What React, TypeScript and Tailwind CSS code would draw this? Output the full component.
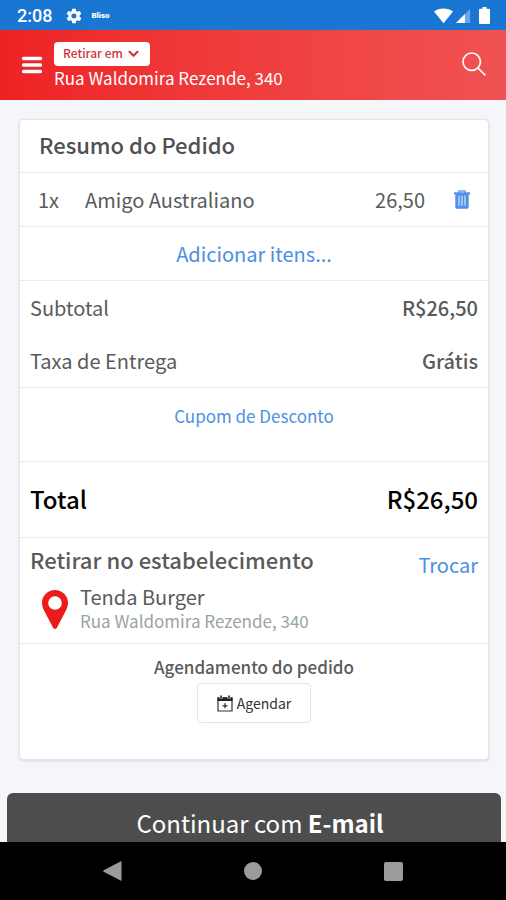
import type { ReactNode } from 'react';
import { IoMdSettings } from 'react-icons/io';

interface RowProps {
    label: string;
    value: string;
}

function StatusBar() {
    return (
        <div className="flex h-[30px] shrink-0 items-center bg-[#1976d2] pt-px pr-4 pl-[17px] text-white">
            <span className="font-['Roboto'] text-[18px] leading-6 font-medium">2:08</span>
            <IoMdSettings className="ml-[13px] size-[18px]" />
            <span className="ml-2 font-['Roboto'] text-[8px] leading-3 font-black">Bliso</span>
            <div className="ml-auto flex items-center gap-[3px]">
                <svg width="19" height="16" viewBox="0 0 19 16" fill="currentColor">
                    <path d="M0 3.4C2.6 1.3 5.8.4 9.5.4s6.900.9 9.500 3L9.500 15.200z" />
                </svg>
                <svg width="15" height="15" viewBox="0 0 16 16" fill="currentColor">
                    <path d="M15 1v15H0z" opacity=".35" />
                    <path d="M9.500 6.500V16H0z" />
                </svg>
                <svg className="ml-[5px]" width="11" height="17" viewBox="0 0 11 17" fill="currentColor">
                    <path d="M3.500 0h4v1.700H10a1 1 0 0 1 1 1V16a1 1 0 0 1-1 1H1a1 1 0 0 1-1-1V2.700a1 1 0 0 1 1-1h2.500z" />
                </svg>
            </div>
        </div>
    );
}

function Header() {
    return (
        <header className="flex h-[70px] shrink-0 items-center bg-linear-to-r from-[#ee2124] to-[#f05252] px-5 text-white">
            <button type="button" aria-label="Menu" className="mr-[10px] w-6">
                <svg width="24" height="20" viewBox="0 0 24 20" stroke="currentColor" strokeWidth="3.400" strokeLinecap="round">
                    <path d="M3.500 3.500h17M3.500 10h17M3.500 16.500h17" />
                </svg>
            </button>
            <div className="flex flex-col items-start pt-[2px]">
                <button
                    type="button"
                    className="flex h-6 items-center gap-[5px] rounded bg-white pr-[11px] pb-[2px] pl-[9px] text-[12px] leading-4 font-medium text-[#d0353a]"
                >
                    Retirar em
                    <svg className="mt-[2px]" width="11" height="8" viewBox="0 0 11 8" fill="none" stroke="currentColor" strokeWidth="2.200" strokeLinecap="round" strokeLinejoin="round">
                        <path d="M1.500 1.800l4 4 4-4" />
                    </svg>
                </button>
                <span className="text-[17px] leading-6">Rua Waldomira Rezende, 340</span>
            </div>
            <button type="button" aria-label="Buscar" className="ml-auto pb-[2px]">
                <svg width="24" height="24" viewBox="0 0 24 24" fill="none" stroke="currentColor" strokeWidth="1.700" strokeLinecap="round">
                    <circle cx="9.700" cy="9.700" r="8.700" />
                    <path d="M16 16l7 7" />
                </svg>
            </button>
        </header>
    );
}

function Section({ children, className }: { children: ReactNode; className: string }) {
    return <section className={`border-b border-[#ececee] last:border-b-0 ${className}`}>{children}</section>;
}

function SummaryRow({ label, value }: RowProps) {
    return (
        <div className="flex h-[53px] items-center justify-between">
            <span>{label}</span>
            <span className="font-medium">{value}</span>
        </div>
    );
}

function TrashIcon() {
    return (
        <svg width="16" height="19" viewBox="0 0 16 19" fill="none">
            <path d="M5 3V1h6v2" stroke="#6ba0ea" strokeWidth="1.500" />
            <path d="M0 2.300h16v2.200H0z" fill="#5190e8" />
            <path d="M1.300 4h13.400v13.200a1.600 1.600 0 0 1-1.600 1.600H2.900a1.600 1.600 0 0 1-1.600-1.600z" fill="#5190e8" />
            <path d="M5 5.800v10M8 5.800v10M11 5.800v10" stroke="#fff" strokeOpacity=".7" strokeWidth="1.300" />
        </svg>
    );
}

function PinIcon() {
    return (
        <svg width="26" height="39" viewBox="0 0 26 39" fill="#ec1c1c">
            <path
                fillRule="evenodd"
                d="M13 0C5.800 0 0 5.700 0 12.800c0 3.300 1.100 6 2.600 8.800l8.300 15.900c.9 1.900 3.300 1.900 4.200 0l8.300-15.900c1.500-2.800 2.600-5.500 2.600-8.800C26 5.700 20.200 0 13 0zm0 6.200a6.800 6.800 0 1 1 0 13.600 6.800 6.800 0 0 1 0-13.600z"
            />
        </svg>
    );
}

function CalendarIcon() {
    return (
        <svg width="16" height="17" viewBox="0 0 16 17" fill="none" stroke="#333">
            <path d="M1 3h14v13H1z" strokeWidth="1.200" />
            <path d="M.5 2.300h15V6H.5z" fill="#222" stroke="none" />
            <path d="M4 0v3.500M12 0v3.500" stroke="#fff" strokeWidth="3" />
            <path d="M4 .5v2.700M12 .5v2.700" strokeWidth="1.700" />
            <path d="M5.500 10.800h5M8 8.300v5" strokeWidth="1.300" />
        </svg>
    );
}

function OrderCard() {
    return (
        <div className="mr-[17px] ml-[19px] rounded border border-[#e3e4e8] bg-white text-[20px] leading-7 text-[#5a5a5a] shadow-sm">
            <Section className="flex h-[53px] items-center px-[19px] pb-1">
                <h1 className="text-[22px] font-medium text-[#505050]">Resumo do Pedido</h1>
            </Section>
            <Section className="flex h-[54px] items-center px-[18px]">
                <span className="w-[47px]">1x</span>
                <span>Amigo Australiano</span>
                <span className="ml-auto">26,50</span>
                <button type="button" aria-label="Remover" className="ml-[29px]">
                    <TrashIcon />
                </button>
            </Section>
            <Section className="flex h-[54px] items-center justify-center">
                <a href="#itens" className="text-[#4a90e2]">Adicionar itens...</a>
            </Section>
            <Section className="px-[10px]">
                <SummaryRow label="Subtotal" value="R$26,50" />
                <SummaryRow label="Taxa de Entrega" value="Grátis" />
            </Section>
            <Section className="flex h-[74px] justify-center pt-[14px]">
                <a href="#cupom" className="text-[17px] text-[#4a90e2]">Cupom de Desconto</a>
            </Section>
            <Section className="flex h-[76px] items-center justify-between px-[10px] pb-[2px] text-[24px] font-medium text-black">
                <span>Total</span>
                <span>R$26,50</span>
            </Section>
            <Section className="h-[106px] px-[10px] pt-[7px]">
                <div className="flex h-9 justify-between">
                    <h2 className="text-[22px] font-medium">Retirar no estabelecimento</h2>
                    <a href="#trocar" className="pt-[6px] text-[#4a90e2]">Trocar</a>
                </div>
                <div className="flex items-center px-3 pt-[4px]">
                    <PinIcon />
                    <div className="ml-3">
                        <p className="leading-6">Tenda Burger</p>
                        <p className="text-[17px] leading-6 text-[#99a3a8]">Rua Waldomira Rezende, 340</p>
                    </div>
                </div>
            </Section>
            <Section className="flex h-[115px] flex-col items-center pt-[11px]">
                <h3 className="text-[17px] leading-6 font-medium">Agendamento do pedido</h3>
                <button
                    type="button"
                    className="mt-1 flex h-10 items-center gap-1 rounded-sm border border-[#e4e4e4] px-[19px] text-[14px] leading-5 text-[#333]"
                >
                    <CalendarIcon />
                    Agendar
                </button>
            </Section>
        </div>
    );
}

function NavigationBar() {
    return (
        <nav className="flex h-[58px] shrink-0 items-center justify-around bg-black px-[42px] text-[#9b9b9b]">
            <button type="button" aria-label="Voltar">
                <svg width="20" height="20" viewBox="0 0 20 20" fill="currentColor">
                    <path d="M18.500 0v20L.7 10.800q-1-.8 0-1.600z" />
                </svg>
            </button>
            <button type="button" aria-label="Início" className="size-[18px] rounded-full bg-[#9b9b9b]" />
            <button type="button" aria-label="Recentes" className="size-[19px] rounded-[2px] bg-[#9b9b9b]" />
        </nav>
    );
}

export default function App() {
    return (
        <div className="flex h-screen flex-col bg-[#f4f6fa] font-['Noto_Sans_CJK_SC',sans-serif]">
            <StatusBar />
            <Header />
            <main className="min-h-0 flex-1 overflow-hidden pt-[19px]">
                <OrderCard />
                <div className="mt-[33px] pr-[5px] pl-[7px]">
                    <button
                        type="button"
                        className="h-[60px] w-full rounded-md bg-[#4d4d4d] pl-3 text-[24px] leading-8 text-white"
                    >
                        Continuar com <strong className="font-bold">E-mail</strong>
                    </button>
                </div>
            </main>
            <NavigationBar />
        </div>
    );
}
